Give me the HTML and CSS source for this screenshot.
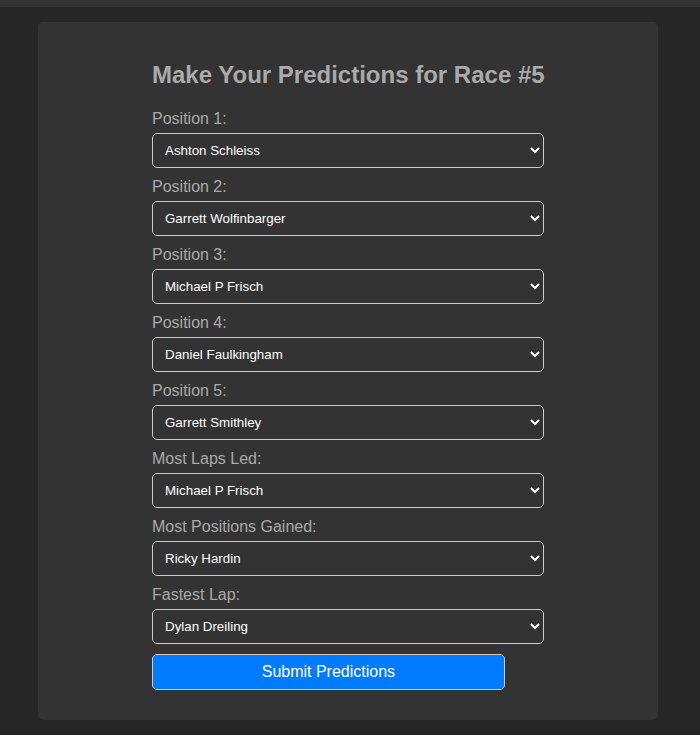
FILE: index.html
```html
<!DOCTYPE html>
<html lang="en">
<head>
<meta charset="utf-8">
<title>Predictions</title>
<link rel="stylesheet" href="styles.css">
</head>
<body>
<div class="topbar"></div>
<main class="card">
  <form class="predict-form">
    <h2 class="title">Make Your Predictions for Race #5</h2>
    <label class="field-label" for="p1">Position 1:</label>
    <select class="field-select" id="p1"><option>Ashton Schleiss</option></select>
    <label class="field-label" for="p2">Position 2:</label>
    <select class="field-select" id="p2"><option>Garrett Wolfinbarger</option></select>
    <label class="field-label" for="p3">Position 3:</label>
    <select class="field-select" id="p3"><option>Michael P Frisch</option></select>
    <label class="field-label" for="p4">Position 4:</label>
    <select class="field-select" id="p4"><option>Daniel Faulkingham</option></select>
    <label class="field-label" for="p5">Position 5:</label>
    <select class="field-select" id="p5"><option>Garrett Smithley</option></select>
    <label class="field-label" for="mll">Most Laps Led:</label>
    <select class="field-select" id="mll"><option>Michael P Frisch</option></select>
    <label class="field-label" for="mpg">Most Positions Gained:</label>
    <select class="field-select" id="mpg"><option>Ricky Hardin</option></select>
    <label class="field-label" for="fl">Fastest Lap:</label>
    <select class="field-select" id="fl"><option>Dylan Dreiling</option></select>
    <button class="submit-btn" type="button">Submit Predictions</button>
  </form>
</main>
</body>
</html>
```

FILE: styles.css
```css
html, body {
  margin: 0;
  padding: 0;
}
body {
  background: #262626;
  font-family: "Liberation Sans", Arial, sans-serif;
  color: #aaaaaa;
  height: 735px;
  overflow: hidden;
}
.topbar {
  height: 7px;
  background: #333333;
}
.card {
  display: block;
  box-sizing: border-box;
  width: 620px;
  margin: 15px 0 0 38px;
  padding: 20px 0 30px;
  background: #333333;
  border-radius: 5px;
}
.predict-form {
  width: 392px;
  margin: 0 auto;
  display: flex;
  flex-direction: column;
  align-items: flex-start;
}
.title {
  margin: 19px 0 21px;
  font-size: 24px;
  line-height: 28px;
  font-weight: bold;
  color: #aaaaaa;
  white-space: nowrap;
}
.field-label {
  display: block;
  font-size: 16px;
  line-height: 18px;
  margin-bottom: 5px;
  color: #aaaaaa;
}
.field-select {
  box-sizing: border-box;
  width: 100%;
  height: 35px;
  margin: 0 0 10px;
  padding: 0 8px;
  font-family: "Liberation Sans", Arial, sans-serif;
  font-size: 13.33px;
  color: #ffffff;
  background-color: #333333;
  border: 1px solid #cccccc;
  border-radius: 5px;
}
.submit-btn {
  box-sizing: border-box;
  width: 90%;
  height: 36px;
  padding: 0;
  font-family: "Liberation Sans", Arial, sans-serif;
  font-size: 16px;
  color: #ffffff;
  background: #007bff;
  border: 1px solid #cccccc;
  border-radius: 5px;
}
```
